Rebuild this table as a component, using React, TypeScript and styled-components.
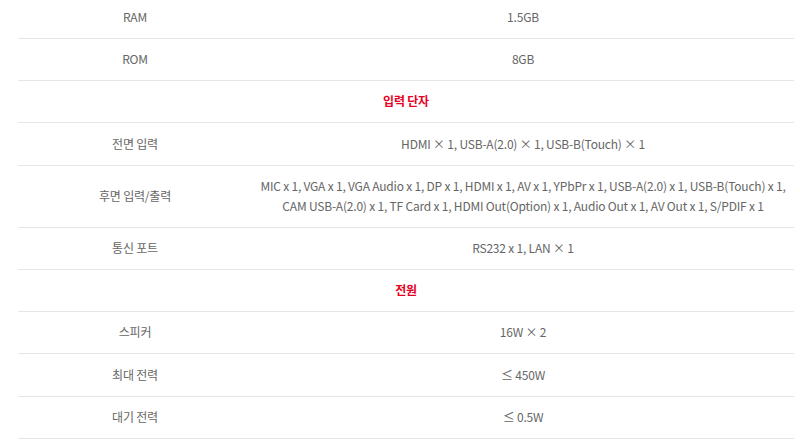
import React from "react";
import styled, { createGlobalStyle } from "styled-components";

const Global = createGlobalStyle`
  html, body { margin: 0; padding: 0; background: #fff; }
  body { font-family: "Noto Sans CJK KR", "Noto Sans", sans-serif; overflow: hidden; }
`;

const Page = styled.div`
  padding: 0 6px 0 18px;
  margin-top: -3.2px;
`;

const Table = styled.div`
  display: grid;
  grid-template-columns: 234px 1fr;
  width: 776px;
`;

const Cell = styled.div<{ $head?: boolean }>`
  grid-column: ${(p) => (p.$head ? "1 / span 2" : "auto")};
  display: flex;
  align-items: center;
  justify-content: center;
  flex-direction: column;
  text-align: center;
  padding: 10.2px 0 11px;
  line-height: 20px;
  font-size: 12px;
  letter-spacing: -0.2px;
  color: ${(p) => (p.$head ? "#e60023" : "#666")};
  font-weight: ${(p) => (p.$head ? 700 : 400)};
  border-bottom: 1px solid #e6e6e6;
`;

const Line = styled.span`
  white-space: nowrap;
`;

type Row = { head?: string; label?: string; value?: string[] };

const rows: Row[] = [
  { label: "RAM", value: ["1.5GB"] },
  { label: "ROM", value: ["8GB"] },
  { head: "입력 단자" },
  { label: "전면 입력", value: ["HDMI × 1, USB-A(2.0) × 1, USB-B(Touch) × 1"] },
  {
    label: "후면 입력/출력",
    value: [
      "MIC x 1, VGA x 1, VGA Audio x 1, DP x 1, HDMI x 1, AV x 1, YPbPr x 1, USB-A(2.0) x 1, USB-B(Touch) x 1,",
      "CAM USB-A(2.0) x 1, TF Card x 1, HDMI Out(Option) x 1, Audio Out x 1, AV Out x 1, S/PDIF x 1",
    ],
  },
  { label: "통신 포트", value: ["RS232 x 1, LAN × 1"] },
  { head: "전원" },
  { label: "스피커", value: ["16W × 2"] },
  { label: "최대 전력", value: ["≤ 450W"] },
  { label: "대기 전력", value: ["≤ 0.5W"] },
];

export default function App() {
  return (
    <>
      <Global />
      <Page>
        <Table>
          {rows.map((r, i) =>
            r.head ? (
              <Cell key={i} $head>
                {r.head}
              </Cell>
            ) : (
              <React.Fragment key={i}>
                <Cell>{r.label}</Cell>
                <Cell>
                  {r.value!.map((v, j) => (
                    <Line key={j}>{v}</Line>
                  ))}
                </Cell>
              </React.Fragment>
            )
          )}
        </Table>
      </Page>
    </>
  );
}
